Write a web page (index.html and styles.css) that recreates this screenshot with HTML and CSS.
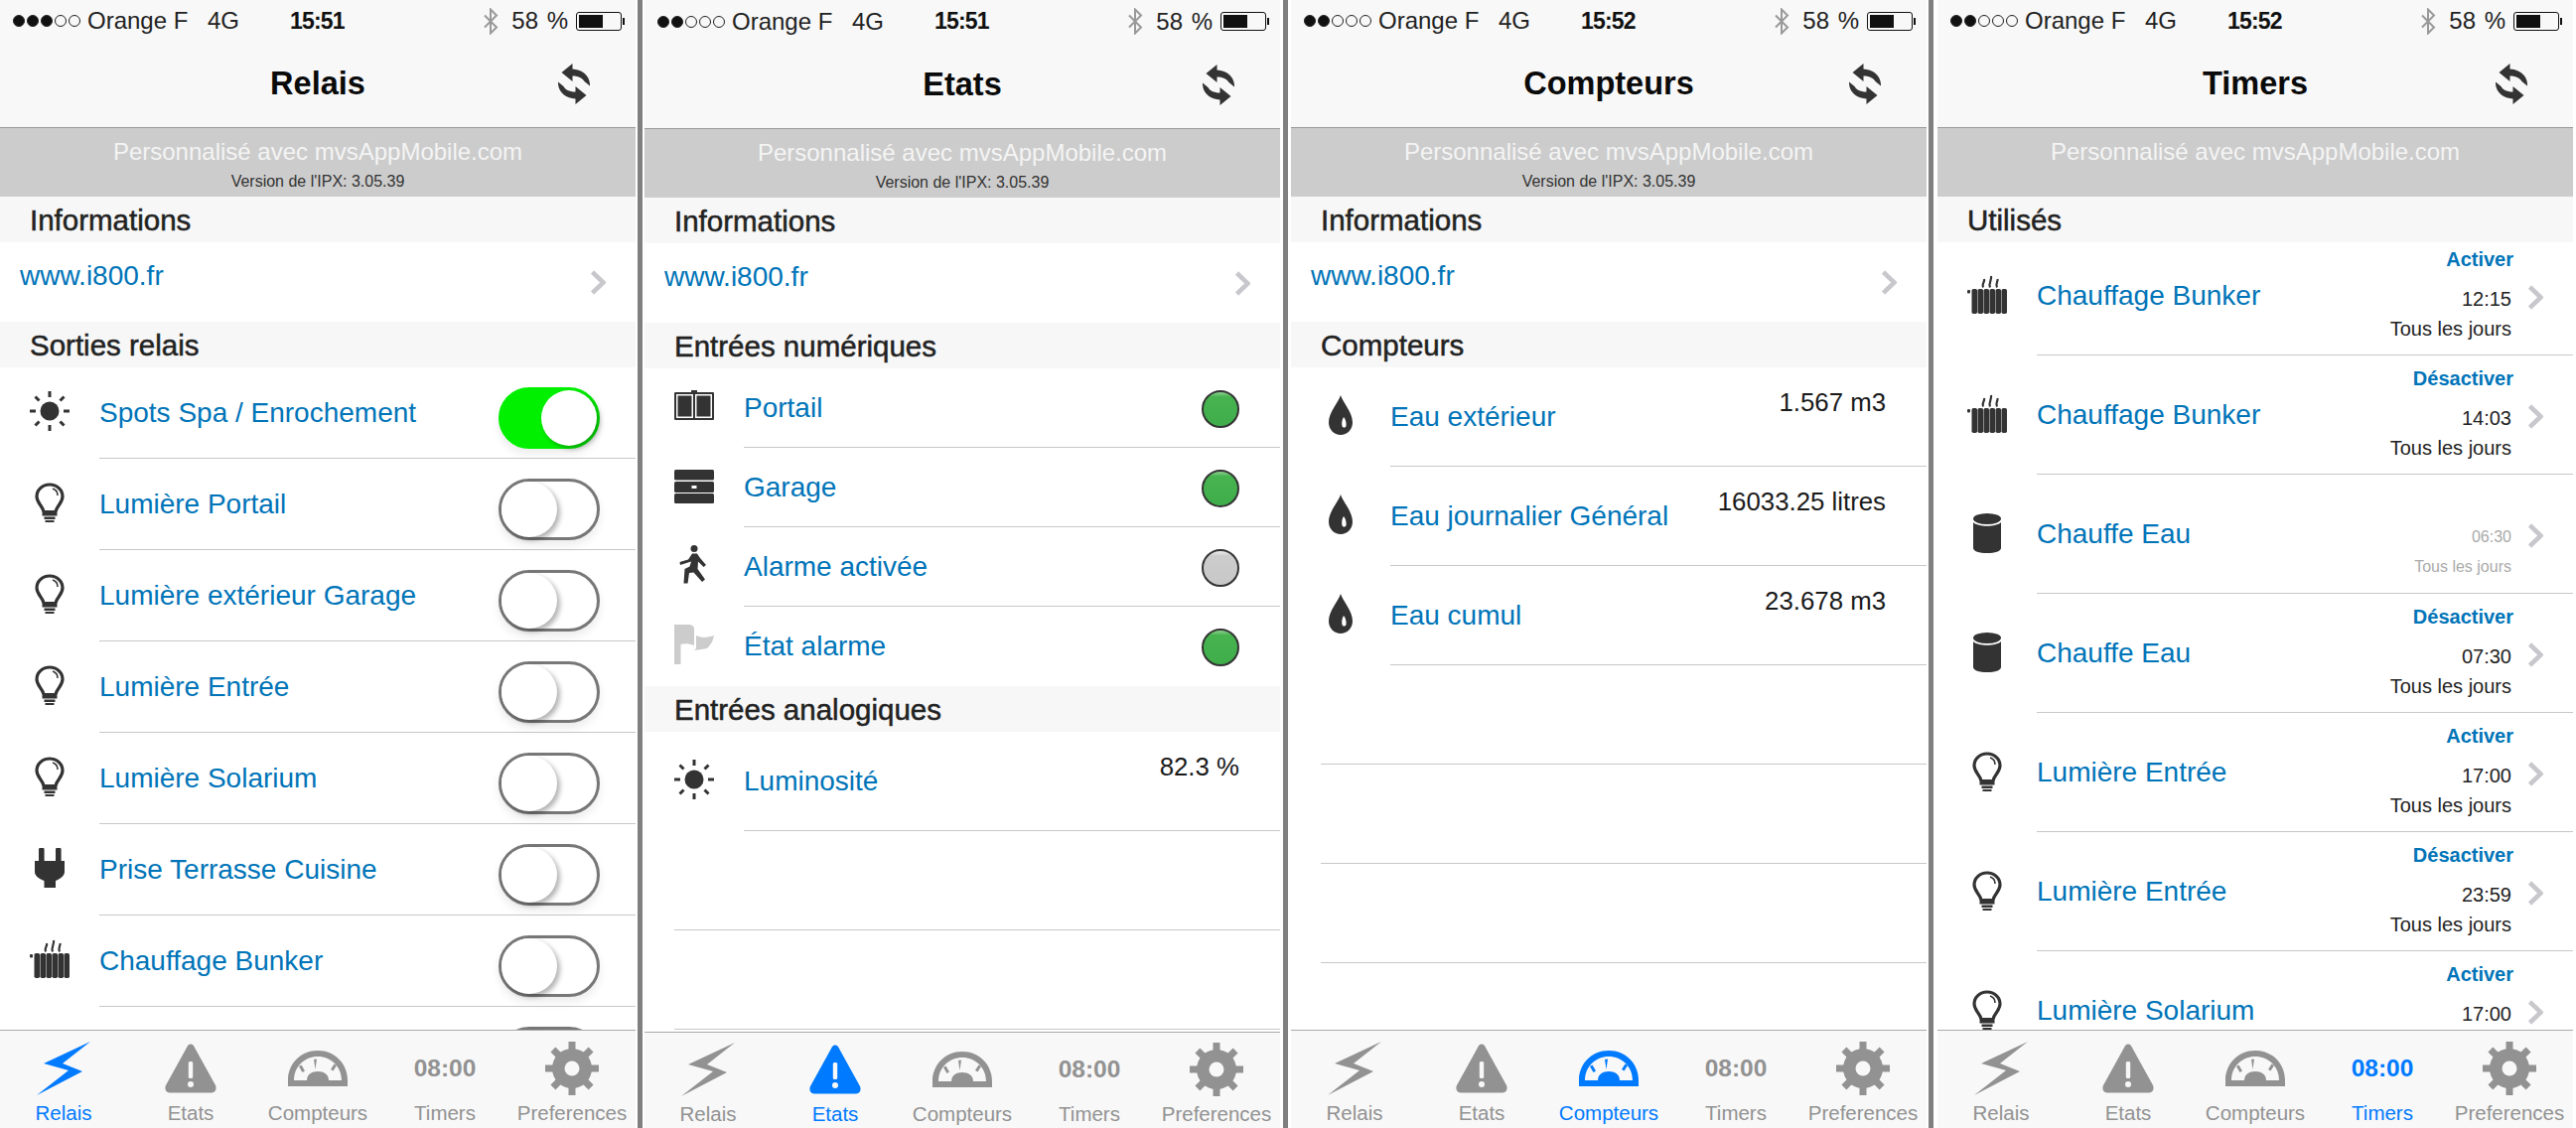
FILE: index.html
```html
<!DOCTYPE html>
<html>
<head>
	<title>mvsAppMobile</title>
	<link rel="stylesheet" href="styles.css">
</head>
<body>

	<!-- shared icons -->
	<svg class="defs" width="0" height="0">
		<symbol id="i-sun" viewBox="0 0 40 40">
			<circle cx="20" cy="20" r="9.500"/>
			<path d="M20 0v6M20 34v6M0 20h6M34 20h6M5.500 5.500l4 4M30.500 30.500l4 4M5.500 34.500l4-4M30.500 9.500l4-4" stroke="currentColor" stroke-width="3"/>
		</symbol>
		<symbol id="i-bulb" viewBox="0 0 40 40">
			<path d="M20 2C27.500 2 33 7.500 33 14C33 21 27 23 26 29.500H14C13 23 7 21 7 14C7 7.500 12.500 2 20 2Z" fill="none" stroke="currentColor" stroke-width="3.200"/>
			<path d="M23 6C26 7 28 10 28 13" fill="none" stroke="currentColor" stroke-width="1.600"/>
			<rect x="12.500" y="31" width="15" height="2.500"/>
			<rect x="14.500" y="34.500" width="11" height="2.500"/>
			<rect x="15.500" y="38" width="9" height="2"/>
		</symbol>
		<symbol id="i-plug" viewBox="0 0 40 40">
			<path d="M9 2a2.800 2.800 0 0 1 5.600 0V13H26V2a2.800 2.800 0 0 1 5.600 0V13H35V24C35 28 31 31 26 33V40H14.500V33C9 31 5 28 5 24V13H9Z"/>
		</symbol>
		<symbol id="i-heater" viewBox="0 0 40 40">
			<rect x="0" y="15" width="3" height="3.500" rx="1"/>
			<rect x="4.500" y="14" width="5.600" height="25" rx="1.800"/>
			<rect x="10.500" y="14" width="5.600" height="25" rx="1.800"/>
			<rect x="16.500" y="14" width="5.600" height="25" rx="1.800"/>
			<rect x="22.500" y="14" width="5.600" height="25" rx="1.800"/>
			<rect x="28.500" y="14" width="5.600" height="25" rx="1.800"/>
			<rect x="34.500" y="14" width="5.500" height="25" rx="1.800"/>
			<path d="M16 12.500C14 9 18 7 17 4M23 12.500C21 8 25 5 24 1M30 12.500C28 9 31 7 30.500 4" fill="none" stroke="currentColor" stroke-width="2.200"/>
		</symbol>
		<symbol id="i-gate" viewBox="0 0 40 40">
			<rect x="17" y="4" width="6" height="3"/>
			<path d="M0 7a1 1 0 0 1 1-1H39a1 1 0 0 1 1 1V33a1 1 0 0 1-1 1H1a1 1 0 0 1-1-1ZM2 8V32H19V8ZM21 8V32H38V8Z" fill-rule="evenodd"/>
			<rect x="3.500" y="9.500" width="14" height="21"/>
			<rect x="22.500" y="9.500" width="14" height="21"/>
		</symbol>
		<symbol id="i-garage" viewBox="0 0 40 40">
			<rect x="0" y="4" width="40" height="10.500" rx="1.500"/>
			<path d="M1.500 16H38.500A1.500 1.500 0 0 1 40 17.500V25.500A1.500 1.500 0 0 1 38.500 27H1.500A1.500 1.500 0 0 1 0 25.500V17.500A1.500 1.500 0 0 1 1.500 16ZM17.500 20V23H22.500V20Z" fill-rule="evenodd"/>
			<rect x="0" y="28" width="40" height="10" rx="1.500"/>
		</symbol>
		<symbol id="i-runner" viewBox="0 0 40 40">
			<circle cx="20" cy="3.500" r="3.500"/>
			<path d="M5.500 17L14 14.500L18 8.500H23L26 13L32 20L29.500 22L24 16.500L23.500 24L31 34.500L28 37L19.500 27.500L15 28L13.500 38.500L9.500 38.500L10.500 24L15.500 21.500L17 16.500L6 20Z"/>
		</symbol>
		<symbol id="i-flag" viewBox="0 0 40 40">
			<path d="M0 0H14C18 0 20 2 20 4V21C15 19 10 19 6.500 20V40H0Z"/>
			<path d="M22 11C28 14 34 13 40 11C39 17 36 21 33 24C29 25 25 25 20 26L22 24Z"/>
		</symbol>
		<symbol id="i-drop" viewBox="0 0 24 40">
			<path fill-rule="evenodd" d="M12 0C14 7 24 17 24 27.500C24 34.500 18.500 40 12 40C5.500 40 0 34.500 0 27.500C0 17 10 7 12 0ZM15 22C13 25 13 29 13.500 31C14 33 17 33 17.500 31C18 28 17 24 15 22Z"/>
		</symbol>
		<symbol id="i-tank" viewBox="0 0 28 40">
			<ellipse cx="14" cy="5.500" rx="14" ry="5.500"/>
			<path d="M0 9C5 14 23 14 28 9V35C28 38 22 40 14 40C6 40 0 38 0 35Z"/>
		</symbol>
		<symbol id="i-refresh" viewBox="0 0 32 41">
			<path d="M14.500 0L3.500 9L14.500 18V12.500C21 12.500 25 15 26.500 18L32 22.500C32.500 12 24 6 14.500 5.500Z"/>
			<path transform="rotate(180 16 20.500)" d="M14.500 0L3.500 9L14.500 18V12.500C21 12.500 25 15 26.500 18L32 22.500C32.500 12 24 6 14.500 5.500Z"/>
		</symbol>
		<symbol id="i-bolt" viewBox="0 0 54 54">
			<path d="M54 0L7 22L32 29L0 54L46 30L26 22Z"/>
		</symbol>
		<symbol id="i-warn" viewBox="0 0 54 50">
			<path d="M27 .5C29 .5 30 2 31 4L52 42C53.500 45 52 49.500 48 49.500H6C2 49.500 .5 45 2 42L23 4C24 2 25 .5 27 .5Z"/>
			<rect class="cut" x="24.800" y="18" width="4.400" height="17" rx="1.500"/>
			<circle class="cut" cx="27" cy="41" r="3"/>
		</symbol>
		<symbol id="i-gauge" viewBox="0 0 60 36">
			<path fill-rule="evenodd" d="M0 36V30C0 13 13 0 30 0C47 0 60 13 60 30V36ZM6 30H54C54 16 43 6 30 6C17 6 6 16 6 30Z"/>
			<path d="M19 30C19 24 24 21 30 21C36 21 41 24 41 30Z"/>
			<path d="M27.500 19L26 9L29 8.500ZM14.500 22L11 16L13.500 14.500L17 20.500ZM45.500 20.500L49 15L46.500 13.500L43 19Z"/>
			<rect x="0" y="30" width="60" height="6"/>
		</symbol>
		<symbol id="i-gear" viewBox="0 0 54 54">
			<rect x="23.500" y="0" width="7" height="54"/>
			<rect x="23.500" y="0" width="7" height="54" transform="rotate(45 27 27)"/>
			<rect x="23.500" y="0" width="7" height="54" transform="rotate(90 27 27)"/>
			<rect x="23.500" y="0" width="7" height="54" transform="rotate(135 27 27)"/>
			<circle cx="27" cy="27" r="20"/>
			<circle class="cut" cx="27" cy="27" r="7.500"/>
		</symbol>
		<symbol id="i-chevron" viewBox="0 0 16 25">
			<path d="M2.500 2L13.500 12.500L2.500 23" fill="none" stroke="currentColor" stroke-width="4.500"/>
		</symbol>
		<symbol id="i-bt" viewBox="0 0 16 27">
			<path d="M2 7.500L14 19.500L8 25.500V1.500L14 7.500L2 19.500" fill="none" stroke="currentColor" stroke-width="2"/>
		</symbol>
	</svg>

	<div class="screens">

		<!-- Relais -->
		<div class="phone">
			<div class="status">
				<span class="dots"><i class="on"></i><i class="on"></i><i class="on"></i><i></i><i></i></span>
				<span class="carrier">Orange F</span><span class="net">4G</span><span class="clock">15:51</span>
				<span class="power"><svg class="bt"><use href="#i-bt"/></svg><span class="pct">58 %</span><span class="batt"><b></b></span></span>
			</div>
			<div class="nav"><span></span><h1>Relais</h1><svg class="refresh"><use href="#i-refresh"/></svg></div>
			<div class="banner"><div class="brand">Personnalisé avec mvsAppMobile.com</div><div class="version">Version de l'IPX: 3.05.39</div></div>
			<div class="list">
				<div class="section">Informations</div>
				<div class="link-row"><span class="link">www.i800.fr</span><svg class="chevron"><use href="#i-chevron"/></svg></div>
				<div class="section">Sorties relais</div>
				<div class="row sw"><svg class="ico"><use href="#i-sun"/></svg><div class="body"><span class="name">Spots Spa / Enrochement</span><span class="toggle on"><i></i></span></div></div>
				<div class="row sw"><svg class="ico"><use href="#i-bulb"/></svg><div class="body"><span class="name">Lumière Portail</span><span class="toggle"><i></i></span></div></div>
				<div class="row sw"><svg class="ico"><use href="#i-bulb"/></svg><div class="body"><span class="name">Lumière extérieur Garage</span><span class="toggle"><i></i></span></div></div>
				<div class="row sw"><svg class="ico"><use href="#i-bulb"/></svg><div class="body"><span class="name">Lumière Entrée</span><span class="toggle"><i></i></span></div></div>
				<div class="row sw"><svg class="ico"><use href="#i-bulb"/></svg><div class="body"><span class="name">Lumière Solarium</span><span class="toggle"><i></i></span></div></div>
				<div class="row sw"><svg class="ico"><use href="#i-plug"/></svg><div class="body"><span class="name">Prise Terrasse Cuisine</span><span class="toggle"><i></i></span></div></div>
				<div class="row sw"><svg class="ico"><use href="#i-heater"/></svg><div class="body"><span class="name">Chauffage Bunker</span><span class="toggle"><i></i></span></div></div>
				<div class="row sw"><svg class="ico"><use href="#i-heater"/></svg><div class="body"><span class="toggle"><i></i></span></div></div>
			</div>
			<div class="tabbar">
				<div class="tab active"><svg class="t-bolt"><use href="#i-bolt"/></svg><span>Relais</span></div>
				<div class="tab"><svg class="t-warn"><use href="#i-warn"/></svg><span>Etats</span></div>
				<div class="tab"><svg class="t-gauge"><use href="#i-gauge"/></svg><span>Compteurs</span></div>
				<div class="tab"><strong>08:00</strong><span>Timers</span></div>
				<div class="tab"><svg class="t-gear"><use href="#i-gear"/></svg><span>Preferences</span></div>
			</div>
		</div>

		<!-- Etats -->
		<div class="phone etats">
			<div class="status">
				<span class="dots"><i class="on"></i><i class="on"></i><i></i><i></i><i></i></span>
				<span class="carrier">Orange F</span><span class="net">4G</span><span class="clock">15:51</span>
				<span class="power"><svg class="bt"><use href="#i-bt"/></svg><span class="pct">58 %</span><span class="batt"><b></b></span></span>
			</div>
			<div class="nav"><span></span><h1>Etats</h1><svg class="refresh"><use href="#i-refresh"/></svg></div>
			<div class="banner"><div class="brand">Personnalisé avec mvsAppMobile.com</div><div class="version">Version de l'IPX: 3.05.39</div></div>
			<div class="list">
				<div class="section">Informations</div>
				<div class="link-row"><span class="link">www.i800.fr</span><svg class="chevron"><use href="#i-chevron"/></svg></div>
				<div class="section">Entrées numériques</div>
				<div class="row input"><svg class="ico"><use href="#i-gate"/></svg><div class="body"><span class="name">Portail</span><span class="led"></span></div></div>
				<div class="row input"><svg class="ico"><use href="#i-garage"/></svg><div class="body"><span class="name">Garage</span><span class="led"></span></div></div>
				<div class="row input"><svg class="ico"><use href="#i-runner"/></svg><div class="body"><span class="name">Alarme activée</span><span class="led off"></span></div></div>
				<div class="row input last"><svg class="ico pale"><use href="#i-flag"/></svg><div class="body"><span class="name">État alarme</span><span class="led"></span></div></div>
				<div class="section">Entrées analogiques</div>
				<div class="row value"><svg class="ico"><use href="#i-sun"/></svg><div class="body"><span class="name">Luminosité</span><span class="val">82.3 %</span></div></div>
				<div class="empty"></div>
				<div class="empty"></div>
			</div>
			<div class="tabbar">
				<div class="tab"><svg class="t-bolt"><use href="#i-bolt"/></svg><span>Relais</span></div>
				<div class="tab active"><svg class="t-warn"><use href="#i-warn"/></svg><span>Etats</span></div>
				<div class="tab"><svg class="t-gauge"><use href="#i-gauge"/></svg><span>Compteurs</span></div>
				<div class="tab"><strong>08:00</strong><span>Timers</span></div>
				<div class="tab"><svg class="t-gear"><use href="#i-gear"/></svg><span>Preferences</span></div>
			</div>
		</div>

		<!-- Compteurs -->
		<div class="phone">
			<div class="status">
				<span class="dots"><i class="on"></i><i class="on"></i><i></i><i></i><i></i></span>
				<span class="carrier">Orange F</span><span class="net">4G</span><span class="clock">15:52</span>
				<span class="power"><svg class="bt"><use href="#i-bt"/></svg><span class="pct">58 %</span><span class="batt"><b></b></span></span>
			</div>
			<div class="nav"><span></span><h1>Compteurs</h1><svg class="refresh"><use href="#i-refresh"/></svg></div>
			<div class="banner"><div class="brand">Personnalisé avec mvsAppMobile.com</div><div class="version">Version de l'IPX: 3.05.39</div></div>
			<div class="list">
				<div class="section">Informations</div>
				<div class="link-row"><span class="link">www.i800.fr</span><svg class="chevron"><use href="#i-chevron"/></svg></div>
				<div class="section">Compteurs</div>
				<div class="row value"><svg class="ico drop"><use href="#i-drop"/></svg><div class="body"><span class="name">Eau extérieur</span><span class="val">1.567 m3</span></div></div>
				<div class="row value"><svg class="ico drop"><use href="#i-drop"/></svg><div class="body"><span class="name">Eau journalier Général</span><span class="val">16033.25 litres</span></div></div>
				<div class="row value"><svg class="ico drop"><use href="#i-drop"/></svg><div class="body"><span class="name">Eau cumul</span><span class="val">23.678 m3</span></div></div>
				<div class="empty"></div>
				<div class="empty"></div>
				<div class="empty"></div>
			</div>
			<div class="tabbar">
				<div class="tab"><svg class="t-bolt"><use href="#i-bolt"/></svg><span>Relais</span></div>
				<div class="tab"><svg class="t-warn"><use href="#i-warn"/></svg><span>Etats</span></div>
				<div class="tab active"><svg class="t-gauge"><use href="#i-gauge"/></svg><span>Compteurs</span></div>
				<div class="tab"><strong>08:00</strong><span>Timers</span></div>
				<div class="tab"><svg class="t-gear"><use href="#i-gear"/></svg><span>Preferences</span></div>
			</div>
		</div>

		<!-- Timers -->
		<div class="phone">
			<div class="status">
				<span class="dots"><i class="on"></i><i class="on"></i><i></i><i></i><i></i></span>
				<span class="carrier">Orange F</span><span class="net">4G</span><span class="clock">15:52</span>
				<span class="power"><svg class="bt"><use href="#i-bt"/></svg><span class="pct">58 %</span><span class="batt"><b></b></span></span>
			</div>
			<div class="nav"><span></span><h1>Timers</h1><svg class="refresh"><use href="#i-refresh"/></svg></div>
			<div class="banner"><div class="brand">Personnalisé avec mvsAppMobile.com</div></div>
			<div class="list">
				<div class="section">Utilisés</div>
				<div class="row timer"><svg class="ico"><use href="#i-heater"/></svg><div class="body"><span class="name">Chauffage Bunker</span><div class="when"><span class="action">Activer</span><span class="time">12:15</span><span class="days">Tous les jours</span></div><svg class="chevron"><use href="#i-chevron"/></svg></div></div>
				<div class="row timer"><svg class="ico"><use href="#i-heater"/></svg><div class="body"><span class="name">Chauffage Bunker</span><div class="when"><span class="action">Désactiver</span><span class="time">14:03</span><span class="days">Tous les jours</span></div><svg class="chevron"><use href="#i-chevron"/></svg></div></div>
				<div class="row timer"><svg class="ico"><use href="#i-tank"/></svg><div class="body"><span class="name">Chauffe Eau</span><div class="when idle"><span class="action"></span><span class="time">06:30</span><span class="days">Tous les jours</span></div><svg class="chevron"><use href="#i-chevron"/></svg></div></div>
				<div class="row timer"><svg class="ico"><use href="#i-tank"/></svg><div class="body"><span class="name">Chauffe Eau</span><div class="when"><span class="action">Désactiver</span><span class="time">07:30</span><span class="days">Tous les jours</span></div><svg class="chevron"><use href="#i-chevron"/></svg></div></div>
				<div class="row timer"><svg class="ico"><use href="#i-bulb"/></svg><div class="body"><span class="name">Lumière Entrée</span><div class="when"><span class="action">Activer</span><span class="time">17:00</span><span class="days">Tous les jours</span></div><svg class="chevron"><use href="#i-chevron"/></svg></div></div>
				<div class="row timer"><svg class="ico"><use href="#i-bulb"/></svg><div class="body"><span class="name">Lumière Entrée</span><div class="when"><span class="action">Désactiver</span><span class="time">23:59</span><span class="days">Tous les jours</span></div><svg class="chevron"><use href="#i-chevron"/></svg></div></div>
				<div class="row timer"><svg class="ico"><use href="#i-bulb"/></svg><div class="body"><span class="name">Lumière Solarium</span><div class="when"><span class="action">Activer</span><span class="time">17:00</span></div><svg class="chevron"><use href="#i-chevron"/></svg></div></div>
			</div>
			<div class="tabbar">
				<div class="tab"><svg class="t-bolt"><use href="#i-bolt"/></svg><span>Relais</span></div>
				<div class="tab"><svg class="t-warn"><use href="#i-warn"/></svg><span>Etats</span></div>
				<div class="tab"><svg class="t-gauge"><use href="#i-gauge"/></svg><span>Compteurs</span></div>
				<div class="tab active"><strong>08:00</strong><span>Timers</span></div>
				<div class="tab"><svg class="t-gear"><use href="#i-gear"/></svg><span>Preferences</span></div>
			</div>
		</div>

	</div>

</body>
</html>
```

FILE: styles.css
```css
* { box-sizing: border-box; }

html, body { margin: 0; height: 100%; }

body {
	background: #808080;
	font-family: "Liberation Sans", Arial, sans-serif;
	overflow: hidden;
}

.defs { position: absolute; }

.cut { fill: #f8f8f8; }

.screens {
	display: flex;
	gap: 5px;
	width: 2594px;
	height: 1136px;
}

/* each phone shot has a thin white lip left and right of its 640px content */
.phone {
	display: flex;
	flex: none;
	flex-direction: column;
	width: 645px;
	height: 1136px;
	background: #fff;
	border-left: 2px solid #fff;
	border-right: 3px solid #fff;
	overflow: hidden;
}

.phone:first-child { width: 642px; border-left: 0; border-right-width: 2px; }
.phone:nth-child(3) { border-left-width: 3px; border-right-width: 2px; }
.phone:nth-child(4) { width: 647px; border-left-width: 4px; }

/* status bar */
.status {
	display: flex;
	align-items: center;
	height: 42px;
	padding-left: 13px;
	background: #f8f8f8;
	font-size: 24px;
	color: #222;
}

.dots { display: flex; gap: 2px; width: 75px; }

.dots i {
	width: 12px;
	height: 12px;
	border: 1px solid #222;
	border-radius: 50%;
}

.dots i.on { background: #111; }

.carrier { width: 121px; }
.net { width: 83px; }

.clock {
	font-size: 23px;
	font-weight: bold;
	letter-spacing: -0.8px;
	color: #111;
}

.power {
	display: flex;
	align-items: center;
	margin-left: auto;
	margin-right: 11px;
}

.bt { width: 16px; height: 27px; color: #999; margin-right: 13px; }

.pct { word-spacing: 2px; margin-right: 8px; }

.batt {
	display: flex;
	width: 46px;
	height: 19px;
	padding: 2px;
	margin-right: 3px;
	border: 1px solid #111;
	border-radius: 3px;
	position: relative;
}

.batt b { width: 24px; background: #111; }

.batt:after {
	content: "";
	position: absolute;
	right: -4px;
	top: 5px;
	width: 2px;
	height: 7px;
	background: #111;
}

/* title */
.nav {
	display: grid;
	grid-template-columns: 1fr auto 1fr;
	align-items: center;
	height: 87px;
	padding-bottom: 1px;
	background: #f8f8f8;
	border-bottom: 1px solid #999;
}

.nav h1 {
	margin: 0;
	font-size: 32.500px;
	font-weight: bold;
	color: #0a0a0a;
}

.refresh {
	justify-self: end;
	width: 32px;
	height: 41px;
	margin-right: 46px;
	fill: #333;
}

.banner {
	height: 69px;
	padding-top: 9px;
	background: #ccc;
	text-align: center;
}

.brand {
	font-size: 24px;
	line-height: 30px;
	color: #f4f4f4;
}

.version {
	margin-top: 5px;
	font-size: 16px;
	line-height: 20px;
	color: #333;
}

/* lists */
.list { flex: 1; min-height: 0; overflow: hidden; }

.section {
	height: 46px;
	padding-left: 30px;
	background: #f7f7f7;
	font-size: 29.500px;
	line-height: 47px;
	color: #222;
	-webkit-text-stroke: 0.5px #222;
}

.link-row {
	display: flex;
	justify-content: space-between;
	height: 80px;
	padding: 18px 30px 0 20px;
}

.link, .name {
	font-size: 28px;
	line-height: 32px;
	color: #0074b8;
}

.chevron {
	flex: none;
	width: 16px;
	height: 25px;
	margin-top: 10px;
	color: #c7c7cc;
}

.row { display: flex; }

.ico {
	flex: none;
	width: 40px;
	height: 40px;
	margin-left: 30px;
	color: #333;
	fill: #333;
}

.ico.pale { color: #ccc; fill: #ccc; }

.ico.drop { width: 24px; margin-left: 38px; margin-right: 8px; }

.body {
	flex: 1;
	display: flex;
	justify-content: space-between;
	align-items: flex-start;
	margin-left: 30px;
	border-bottom: 1px solid #c8c8c8;
}

.empty {
	height: 100px;
	margin-left: 30px;
	border-bottom: 1px solid #c8c8c8;
}

/* switches */
.sw { height: 92px; }
.sw .ico { margin-top: 24px; }
.sw .name { margin-top: 30px; }

.toggle {
	display: flex;
	align-items: center;
	width: 102px;
	height: 62px;
	margin: 20px 36px 0 auto;
	border: 3px solid #777;
	border-radius: 31px;
	background: #fff;
	box-shadow: 0 5px 10px rgba(0, 0, 0, 0.08);
}

.toggle i {
	width: 56px;
	height: 56px;
	border-radius: 50%;
	background: #fff;
	box-shadow: 3px 3px 5px rgba(0, 0, 0, 0.3);
}

.toggle.on {
	justify-content: flex-end;
	background: #00f000;
	border-color: #00f000;
}

/* inputs */
.input { height: 80px; }
.input .ico { margin-top: 18px; }
.input .name { margin-top: 24px; }
.input.last .body { border-bottom: 0; }

.led {
	width: 38px;
	height: 38px;
	margin: 22px 41px 0 0;
	border: 2px solid #333;
	border-radius: 50%;
	background: linear-gradient(#8fd08f, #46b34f 14%, #3fae4a);
}

.led.off { background: linear-gradient(#eee, #ccc 14%, #c8c8c8); }

/* values */
.value { height: 100px; }
.value .ico { margin-top: 28px; }
.value .name { margin-top: 34px; }

.val {
	margin: 19px 41px 0 0;
	font-size: 25.800px;
	line-height: 32px;
	color: #1a1a1a;
}

/* timers */
.timer { height: 120px; }
.timer:nth-child(2) { margin-top: -6px; }
.timer .ico { margin-top: 39px; }
.timer .name { margin-top: 44px; }
.timer .chevron { margin: 49px 30px 0 16px; }

.when {
	display: flex;
	flex-direction: column;
	align-items: flex-end;
	margin-left: auto;
	font-size: 20px;
	line-height: 24px;
	color: #222;
}

.action {
	height: 24px;
	margin: 11px -2px 0 0;
	font-weight: bold;
	color: #0074b8;
}

.time { margin-top: 16px; }
.days { margin-top: 6px; }

.idle { font-size: 16px; color: #aaa; }

/* tab bar */
.tabbar {
	display: flex;
	flex: none;
	height: 99px;
	padding-top: 11px;
	background: #f8f8f8;
	border-top: 1px solid #aaa;
}

.etats .tabbar { height: 97px; padding-top: 10px; }
.etats .status { height: 43px; }

.tab {
	flex: 1;
	display: flex;
	flex-direction: column;
	align-items: center;
	font-size: 20.500px;
	color: #929292;
	fill: #929292;
}

.tab svg { height: 54px; }

.t-bolt { width: 54px; }
.t-warn { width: 54px; padding: 2px 0; }
.t-gauge { width: 60px; padding: 9px 0; }
.t-gear { width: 54px; }

.tab strong {
	height: 54px;
	font-size: 24.500px;
	line-height: 54px;
}

.tab span { margin-top: 6px; line-height: 24px; }

.tab.active { color: #007aff; fill: #007aff; }
```
